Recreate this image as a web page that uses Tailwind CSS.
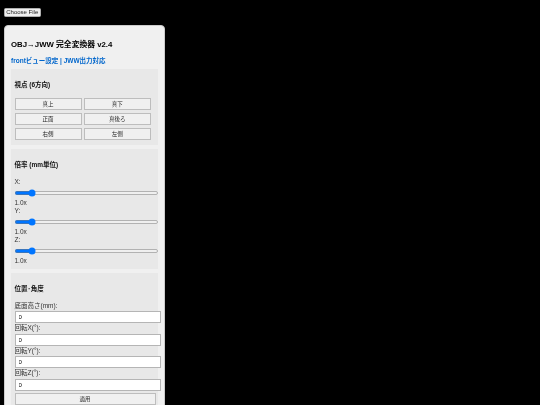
<!DOCTYPE html>
<html lang="en">

<head>
    <meta charset="UTF-8">
    <meta name="viewport" content="width=device-width, initial-scale=1.0">
    <title>OBJ→JWW</title>
    <script src="https://cdn.jsdelivr.net/npm/@tailwindcss/browser@4"></script>
</head>

<body class="bg-black overflow-hidden font-['Liberation_Sans','Noto_Sans_CJK_JP',sans-serif]">
    <div class="[zoom:0.5] will-change-transform relative w-[1080px] h-[810px] overflow-hidden">
        <button class="absolute left-[8px] top-[16px] h-[17px] w-[73px] bg-[#efefef] border border-[#b0b0b0] rounded-[3px] text-[12px] leading-none text-[#222222]">Choose File</button>

        <!-- floating panel over the canvas -->
        <div class="absolute left-[8px] top-[50px] w-[321px] bg-[#f0f0f0] rounded-[8px] border border-[#cccccc] px-[12px] pt-[12px] shadow-md">
            <h3 class="text-[15.6px] leading-[18px] font-bold mt-[16px] mb-[16px] text-black">OBJ→JWW 完全変換器 v2.4</h3>
            <p class="text-[13px] leading-[16px] font-bold text-[#0066cc] mb-[7px]">frontビュー設定 | JWW出力対応</p>

            <section class="bg-[#e8e8e8] pl-[7px] pt-[24px] mb-[8px] h-[152px]">
                <h4 class="text-[13px] leading-[16px] font-bold text-[#111111] mb-[18px]">視点 (6方向)</h4>
                <div class="grid grid-cols-2 gap-x-[4px] gap-y-[5px] w-[273px]">
                    <button class="h-[25px] bg-[#f0f0f0] border-2 border-[#bdbdbd] text-[11px] text-[#222222]">真上</button>
                    <button class="h-[25px] bg-[#f0f0f0] border-2 border-[#bdbdbd] text-[11px] text-[#222222]">真下</button>
                    <button class="h-[25px] bg-[#f0f0f0] border-2 border-[#bdbdbd] text-[11px] text-[#222222]">正面</button>
                    <button class="h-[25px] bg-[#f0f0f0] border-2 border-[#bdbdbd] text-[11px] text-[#222222]">真後ろ</button>
                    <button class="h-[25px] bg-[#f0f0f0] border-2 border-[#bdbdbd] text-[11px] text-[#222222]">右側</button>
                    <button class="h-[25px] bg-[#f0f0f0] border-2 border-[#bdbdbd] text-[11px] text-[#222222]">左側</button>
                </div>
            </section>

            <section class="bg-[#e8e8e8] pl-[7px] pt-[24px] mb-[9px] h-[240px]">
                <h4 class="text-[13px] leading-[16px] font-bold text-[#111111] mb-[18px]">倍率 (mm単位)</h4>
                <label class="block text-[13px] leading-[16px] text-[#333333]">X:</label>
                <input type="range" min="0" max="10" step="0.1" value="1" class="block -ml-[1px] w-[290px] h-[16px] mt-[6px] mb-[4px] accent-[#0075ff]">
                <div class="text-[13px] leading-[16px] text-[#333333]">1.0x</div>
                <label class="block text-[13px] leading-[16px] text-[#333333]">Y:</label>
                <input type="range" min="0" max="10" step="0.1" value="1" class="block -ml-[1px] w-[290px] h-[16px] mt-[6px] mb-[4px] accent-[#0075ff]">
                <div class="text-[13px] leading-[16px] text-[#333333]">1.0x</div>
                <label class="block text-[13px] leading-[16px] text-[#333333]">Z:</label>
                <input type="range" min="0" max="10" step="0.1" value="1" class="block -ml-[1px] w-[290px] h-[16px] mt-[6px] mb-[4px] accent-[#0075ff]">
                <div class="text-[13px] leading-[16px] text-[#333333]">1.0x</div>
            </section>

            <section class="bg-[#e8e8e8] pl-[7px] pt-[24px] h-[300px]">
                <h4 class="text-[13px] leading-[16px] font-bold text-[#111111] mb-[17px]">位置･角度</h4>
                <label class="block text-[13px] leading-[16px] text-[#333333] mb-[3px]">底面高さ(mm):</label>
                <input type="text" value="0" class="block w-[293px] h-[24px] bg-white border border-[#b5b5b5] px-[6px] text-[12px] text-black mb-[2px]">
                <label class="block text-[13px] leading-[16px] text-[#333333] mb-[3px]">回転X(°):</label>
                <input type="text" value="0" class="block w-[293px] h-[24px] bg-white border border-[#b5b5b5] px-[6px] text-[12px] text-black mb-[2px]">
                <label class="block text-[13px] leading-[16px] text-[#333333] mb-[3px]">回転Y(°):</label>
                <input type="text" value="0" class="block w-[293px] h-[24px] bg-white border border-[#b5b5b5] px-[6px] text-[12px] text-black mb-[2px]">
                <label class="block text-[13px] leading-[16px] text-[#333333] mb-[3px]">回転Z(°):</label>
                <input type="text" value="0" class="block w-[293px] h-[24px] bg-white border border-[#b5b5b5] px-[6px] text-[12px] text-black mb-[4px]">
                <button class="block w-[282px] h-[25px] bg-[#f0f0f0] border-2 border-[#bdbdbd] text-[11px] text-[#222222]">適用</button>
            </section>
        </div>
    </div>
</body>

</html>
